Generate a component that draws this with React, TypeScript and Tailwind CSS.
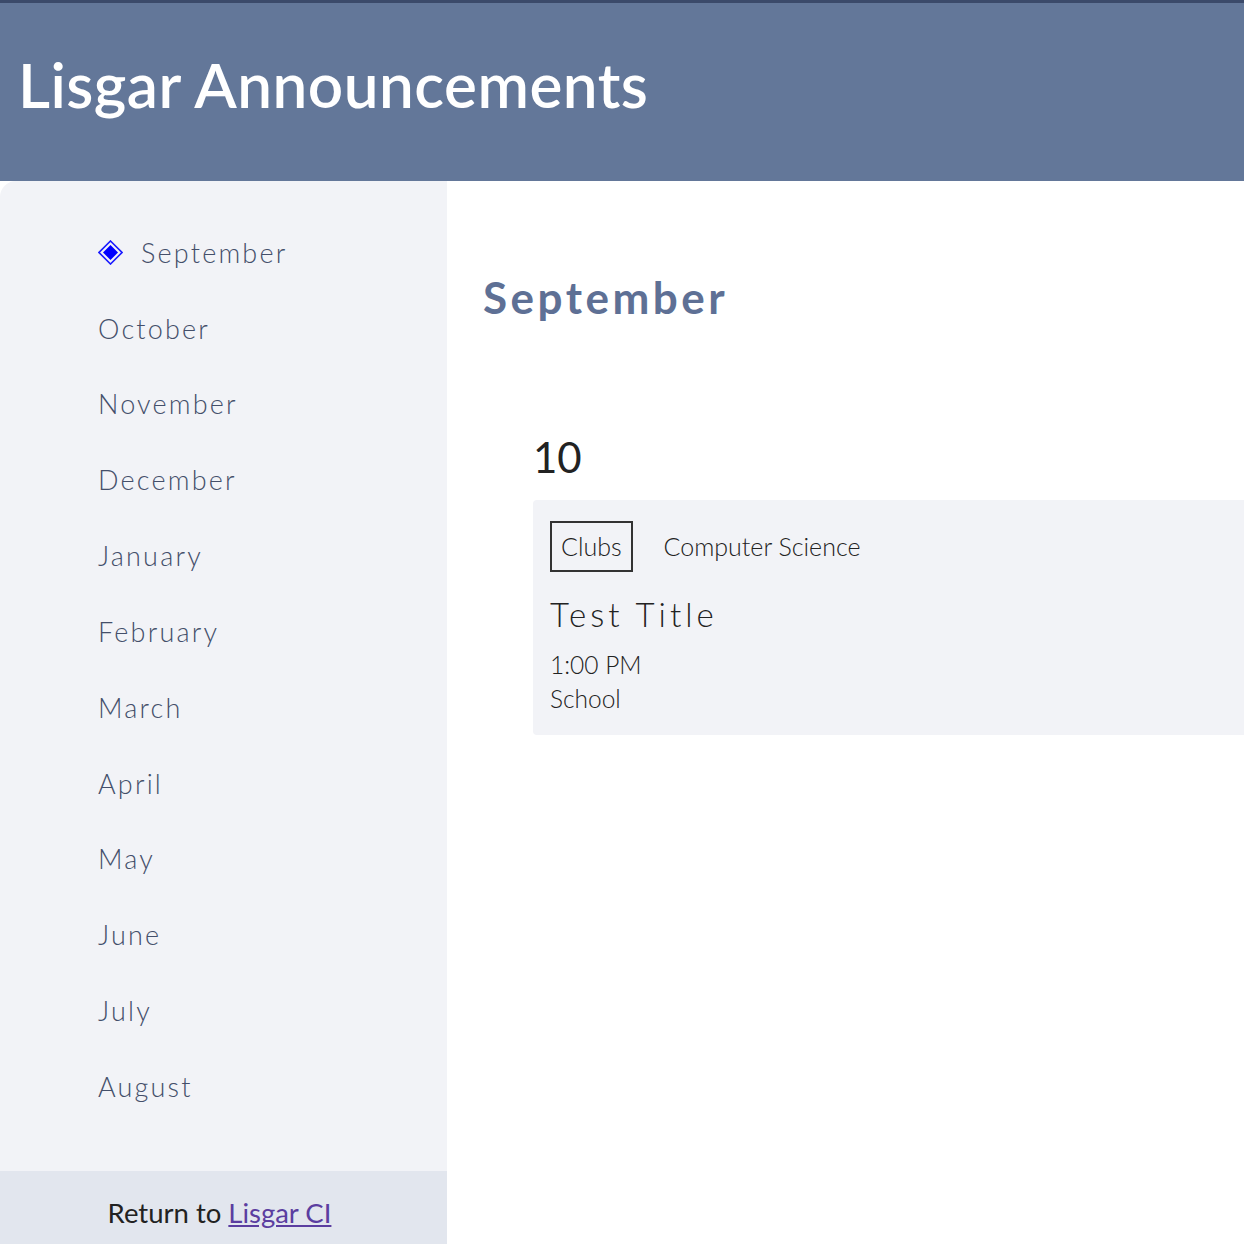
const months = [
  "September",
  "October",
  "November",
  "December",
  "January",
  "February",
  "March",
  "April",
  "May",
  "June",
  "July",
  "August",
];

function Diamond() {
  return (
    <svg width="25" height="25" viewBox="0 0 25 25" className="shrink-0">
      <path d="M12.5 1 L24 12.5 L12.5 24 L1 12.5 Z" fill="none" stroke="#1a1aff" strokeWidth="1.6" />
      <path d="M12.5 5 L20 12.5 L12.5 20 L5 12.5 Z" fill="#0000ff" />
    </svg>
  );
}

export default function App() {
  const active = "September";

  return (
    <div className="flex h-[1244px] flex-col overflow-hidden bg-[#637799] font-['Lato',sans-serif]">
      <header className="h-[181px] shrink-0 border-t-[3px] border-[#3b4a6a] bg-[#637799] px-[18px] pt-[44px]">
        <h1 className="text-[62px] font-semibold leading-[74px] tracking-[0.5px] text-white">
          Lisgar Announcements
        </h1>
      </header>

      <div className="flex flex-1 overflow-hidden bg-white">
        <aside className="flex w-[447px] shrink-0 flex-col rounded-tl-[16px] bg-[#f2f3f7]">
          <ul className="flex-1 pt-[34px]">
            {months.map((m) => (
              <li
                key={m}
                className="flex h-[75.85px] items-center gap-[18px] pl-[98px] text-[27px] font-light tracking-[2.2px] text-[#444f6a]"
              >
                {m === active && <Diamond />}
                <span>{m}</span>
              </li>
            ))}
          </ul>
          <div className="h-[73px] shrink-0 bg-[#e2e6ee] pr-[8px] pt-[26px] text-center text-[27.5px] leading-[32px] text-[#222]">
            Return to{" "}
            <a href="#" className="text-[#5b3ea0] underline">
              Lisgar CI
            </a>
          </div>
        </aside>

        <main className="flex-1 pl-[36px] pt-[88px]">
          <h2 className="text-[44px] font-bold leading-[56px] tracking-[3.5px] text-[#5e7095]">
            September
          </h2>
          <section className="pl-[50px] pt-[106px]">
            <div className="text-[42px] leading-[52px] text-[#222]">10</div>
            <div className="mt-[17px] rounded-l-[4px] bg-[#f2f3f7] px-[17px] pb-[19px] pt-[21px]">
              <div className="flex items-center gap-[31px]">
                <span className="border-2 border-[#333] px-[9px] py-[8px] text-[25px] font-light leading-[31px] text-[#222]">
                  Clubs
                </span>
                <span className="text-[25px] font-light leading-[31px] text-[#222]">Computer Science</span>
              </div>
              <h3 className="mt-[20px] text-[33px] font-light leading-[44px] tracking-[4px] text-[#222]">
                Test Title
              </h3>
              <div className="mt-[12px] text-[24.5px] font-light leading-[34px] text-[#222]">
                <div>1:00 PM</div>
                <div>School</div>
              </div>
            </div>
          </section>
        </main>
      </div>
    </div>
  );
}
